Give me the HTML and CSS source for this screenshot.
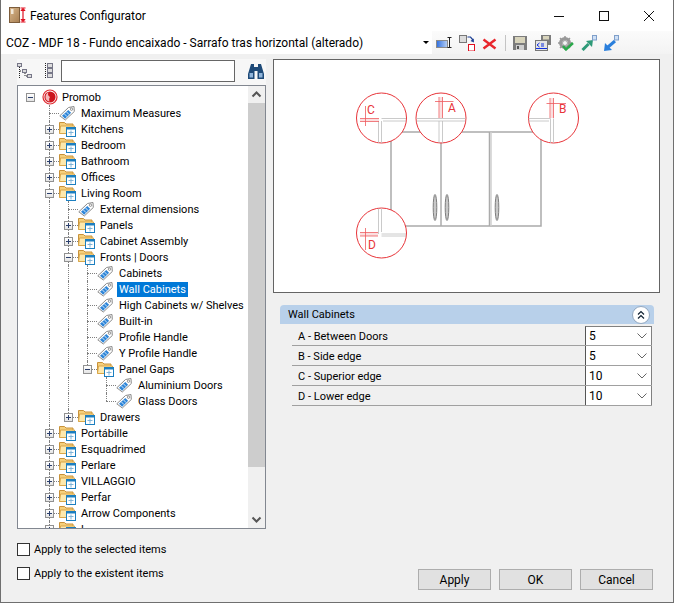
FILE: index.html
```html
<!DOCTYPE html>
<html lang="en">
<head>
  <meta charset="UTF-8">
  <title>Features Configurator</title>
  <link rel="stylesheet" href="styles.css">
</head>
<body>

  <!-- Shared icons -->
  <svg class="defs" width="0" height="0">
    <defs>
      <linearGradient id="renameFill" x1="0" x2="1" y1="0" y2="0">
        <stop offset="0" stop-color="#2f6fe0"/>
        <stop offset="1" stop-color="#b8d0f4"/>
      </linearGradient>
      <linearGradient id="doorFill" x1="0" x2="1" y1="0" y2="1">
        <stop offset="0" stop-color="#d9b78c"/>
        <stop offset="1" stop-color="#a87f52"/>
      </linearGradient>
    </defs>
    <symbol id="folder" viewBox="0 0 18 16">
      <path d="M0.500 12.500V1.500h5l1.500 1.500h7v3" fill="#f5cf7c" stroke="#c8923a"/>
      <path d="M0.500 12.500l1-7.500h14l-1 7.500z" fill="#fde9ae" stroke="#d9a648"/>
      <rect x="7.500" y="6.500" width="9" height="9" fill="#fff" stroke="#1c7fc0"/>
      <rect x="7.500" y="6.500" width="9" height="2" fill="#1c7fc0"/>
      <path d="M12 9.500v5M9.500 11.500h5" stroke="#7fb4d8" fill="none"/>
    </symbol>
    <symbol id="tag" viewBox="0 0 16 16">
      <path d="M0.800 10.800 9.500 2.500l5.500-1 .300 5L6.300 15z" fill="#fff" stroke="#8a8a8a"/>
      <path d="M3 10.800 9.300 5l2.800 2.700-6 6z" fill="#2f86d8"/>
      <path d="M5.300 8.800 8 11.600M7.500 6.900l2.600 2.700" stroke="#cfe4f7" fill="none"/>
      <circle cx="12.500" cy="4.200" r="1.200" fill="#fff" stroke="#777" stroke-width=".8"/>
    </symbol>
  </svg>

  <div class="window">
    <div class="titlebar">
      <svg class="app-icon" width="18" height="18" viewBox="0 0 18 18">
        <rect x="1.500" y="0.500" width="10" height="15" fill="url(#doorFill)" stroke="#7d5d3c"/>
        <rect x="3" y="2" width="2.500" height="5" fill="#f1e7d8"/>
        <path d="M15 1.500v13" stroke="#e01020" stroke-width="1.200" fill="none"/>
        <path d="M12.500 1h5M12.500 15h5M13 3.500h4l-2-2zM13 12.500h4l-2 2z" stroke="#e01020" fill="#e01020"/>
      </svg>
      <span class="title">Features Configurator</span>
      <div class="win-controls">
        <svg width="12" height="12" viewBox="0 0 12 12"><path d="M1 6.500h10" stroke="#111" fill="none"/></svg>
        <svg width="12" height="12" viewBox="0 0 12 12"><rect x="1.500" y="1.500" width="9" height="9" stroke="#111" fill="none"/></svg>
        <svg width="12" height="12" viewBox="0 0 12 12"><path d="M1 1l10 10M11 1 1 11" stroke="#111" fill="none"/></svg>
      </div>
    </div>

    <div class="toolbar">
      <div class="combo">
        <span class="combo-text">COZ - MDF 18 - Fundo encaixado - Sarrafo tras horizontal (alterado)</span>
        <span class="combo-arrow"></span>
      </div>
      <div class="tool-icons">
        <svg width="17" height="16" viewBox="0 0 17 16">
          <rect x="0.500" y="5.500" width="11" height="7" fill="url(#renameFill)" stroke="#8a8a8a"/>
          <path d="M11.500 2.500h4M11.500 12.500h4M13.500 2.500v10" stroke="#222" fill="none"/>
        </svg>
        <svg width="16" height="16" viewBox="0 0 16 16">
          <rect x="0.500" y="0.500" width="7" height="7" fill="#dcdcdc" stroke="#777"/>
          <rect x="9.500" y="9.500" width="6" height="6.500" fill="#fff" stroke="#e01020"/>
          <path d="M8.500 2h3l2.500 3" stroke="#1c3f94" stroke-width="1.200" fill="none"/>
          <path d="M15 7.500l-.3-4-3.200 2.600z" fill="#1c3f94"/>
        </svg>
        <svg width="16" height="16" viewBox="0 0 16 16">
          <path d="M1.500 4.500l12 9M13.500 4.500l-12 9" stroke="#e8262c" stroke-width="2.400" fill="none"/>
        </svg>
        <span class="tool-sep"></span>
        <svg width="16" height="16" viewBox="0 0 16 16">
          <path d="M1 1h14v14H1z" fill="#7c7c7c"/>
          <rect x="3" y="2" width="10" height="6" fill="#d8d4bc"/>
          <rect x="4" y="10" width="8" height="5" fill="#cfcfcf"/>
          <rect x="5" y="11" width="2" height="3" fill="#555"/>
        </svg>
        <svg width="16" height="16" viewBox="0 0 16 16">
          <path d="M6 0h10v10H6z" fill="#7c7c7c"/>
          <rect x="8" y="1" width="6" height="3.500" fill="#d8d4bc"/>
          <rect x="0.500" y="5.500" width="12" height="10" fill="#e4e4e4" stroke="#777"/>
          <path d="M4.500 8 2 10l2.500 2M6 9h3M6 11h3" stroke="#1030e0" fill="none"/>
          <path d="M1 13.500h11" stroke="#1030e0"/>
        </svg>
        <svg width="16" height="16" viewBox="0 0 16 16">
          <circle cx="7" cy="8" r="4.500" fill="none" stroke="#999" stroke-width="3"/>
          <path d="M7 1v14M0 8h14M2 3l10 10M12 3 2 13" stroke="#999" stroke-width="1.500"/>
          <circle cx="7" cy="8" r="2" fill="#f4f4f4"/>
          <path d="M5 11 8 14.500l7-6.500" stroke="#2aa84a" stroke-width="2.400" fill="none"/>
        </svg>
        <svg width="16" height="16" viewBox="0 0 16 16">
          <path d="M1.500 15 7.500 9" stroke="#2e9a78" stroke-width="3" fill="none"/>
          <path d="M5 6l7-1-1 7z" fill="#2e9a78"/>
          <rect x="11.500" y="0.500" width="4" height="4.500" fill="#cfe0f5" stroke="#7f9fca"/>
        </svg>
        <svg width="16" height="16" viewBox="0 0 16 16">
          <path d="M4 12 11 6" stroke="#2a7fdc" stroke-width="3" fill="none"/>
          <path d="M0 16l1-8 7 7z" fill="#2a7fdc"/>
          <rect x="10.500" y="0.500" width="4" height="4.500" fill="#cfe0f5" stroke="#7f9fca"/>
        </svg>
      </div>
    </div>

    <div class="content">
      <div class="left">
        <div class="tree-tools">
          <svg class="tt-collapse" width="15" height="16" viewBox="0 0 15 16">
            <rect x="0.500" y="0.500" width="4" height="3" fill="#ddd" stroke="#778"/>
            <rect x="5.500" y="6.500" width="4" height="3" fill="#ddd" stroke="#778"/>
            <rect x="10.500" y="11.500" width="4" height="3" fill="#ddd" stroke="#778"/>
            <path d="M2.500 4v12M3 8h2M8 10v3h2" stroke="#222" stroke-dasharray="1 1" fill="none"/>
          </svg>
          <svg class="tt-expand" width="9" height="16" viewBox="0 0 9 16">
            <path d="M1.500 0v16" stroke="#222" stroke-dasharray="1 1" fill="none"/>
            <rect x="3.500" y="0.500" width="5" height="4" fill="#ddd" stroke="#778"/>
            <rect x="3.500" y="5.500" width="5" height="4" fill="#ddd" stroke="#778"/>
            <rect x="3.500" y="10.500" width="5" height="4" fill="#ddd" stroke="#778"/>
          </svg>
          <input class="search" type="text">
          <svg class="binoculars" width="16" height="15" viewBox="0 0 16 15">
            <path d="M3 0h3v3h4V0h3l3 10v5H9.500V7h-3v8H0v-5z" fill="#1e4a78"/>
            <rect x="1.500" y="9" width="3.500" height="4.500" fill="#8fb4da"/>
            <rect x="11" y="9" width="3.500" height="4.500" fill="#8fb4da"/>
          </svg>
        </div>

        <div class="tree">
          <div class="tree-rows">
            <div class="row">
              <span class="cell exp minus solo"></span>
              <span class="cell icon"><svg width="16" height="16" viewBox="0 0 16 16">
                <circle cx="8" cy="8" r="7" fill="#fff" stroke="#e02a30" stroke-width="1.200"/>
                <circle cx="8" cy="8" r="5.600" fill="#cc141c"/>
                <path d="M3.500 8c0-3 2-4.500 3-4.500C5.500 5 6 7 8 8c-1 1-1 3-.5 4.500C5 12 3.500 10.500 3.500 8z" fill="#f4b8ba"/>
              </svg></span>
              <span class="label">Promob</span>
            </div>
            <div class="row"><span class="cell"></span><span class="cell tee"></span><svg class="ic" width="16" height="16"><use href="#tag"/></svg><span class="label">Maximum Measures</span></div>
            <div class="row"><span class="cell"></span><span class="cell exp plus v"></span><svg class="ic" width="18" height="16"><use href="#folder"/></svg><span class="label">Kitchens</span></div>
            <div class="row"><span class="cell"></span><span class="cell exp plus v"></span><svg class="ic" width="18" height="16"><use href="#folder"/></svg><span class="label">Bedroom</span></div>
            <div class="row"><span class="cell"></span><span class="cell exp plus v"></span><svg class="ic" width="18" height="16"><use href="#folder"/></svg><span class="label">Bathroom</span></div>
            <div class="row"><span class="cell"></span><span class="cell exp plus v"></span><svg class="ic" width="18" height="16"><use href="#folder"/></svg><span class="label">Offices</span></div>
            <div class="row"><span class="cell"></span><span class="cell exp minus v"></span><svg class="ic" width="18" height="16"><use href="#folder"/></svg><span class="label">Living Room</span></div>
            <div class="row"><span class="cell"></span><span class="cell v"></span><span class="cell tee"></span><svg class="ic" width="16" height="16"><use href="#tag"/></svg><span class="label">External dimensions</span></div>
            <div class="row"><span class="cell"></span><span class="cell v"></span><span class="cell exp plus v"></span><svg class="ic" width="18" height="16"><use href="#folder"/></svg><span class="label">Panels</span></div>
            <div class="row"><span class="cell"></span><span class="cell v"></span><span class="cell exp plus v"></span><svg class="ic" width="18" height="16"><use href="#folder"/></svg><span class="label">Cabinet Assembly</span></div>
            <div class="row"><span class="cell"></span><span class="cell v"></span><span class="cell exp minus v"></span><svg class="ic" width="18" height="16"><use href="#folder"/></svg><span class="label">Fronts | Doors</span></div>
            <div class="row"><span class="cell"></span><span class="cell v"></span><span class="cell v"></span><span class="cell tee"></span><svg class="ic" width="16" height="16"><use href="#tag"/></svg><span class="label">Cabinets</span></div>
            <div class="row"><span class="cell"></span><span class="cell v"></span><span class="cell v"></span><span class="cell tee"></span><svg class="ic" width="16" height="16"><use href="#tag"/></svg><span class="label selected">Wall Cabinets</span></div>
            <div class="row"><span class="cell"></span><span class="cell v"></span><span class="cell v"></span><span class="cell tee"></span><svg class="ic" width="16" height="16"><use href="#tag"/></svg><span class="label">High Cabinets w/ Shelves</span></div>
            <div class="row"><span class="cell"></span><span class="cell v"></span><span class="cell v"></span><span class="cell tee"></span><svg class="ic" width="16" height="16"><use href="#tag"/></svg><span class="label">Built-in</span></div>
            <div class="row"><span class="cell"></span><span class="cell v"></span><span class="cell v"></span><span class="cell tee"></span><svg class="ic" width="16" height="16"><use href="#tag"/></svg><span class="label">Profile Handle</span></div>
            <div class="row"><span class="cell"></span><span class="cell v"></span><span class="cell v"></span><span class="cell tee"></span><svg class="ic" width="16" height="16"><use href="#tag"/></svg><span class="label">Y Profile Handle</span></div>
            <div class="row"><span class="cell"></span><span class="cell v"></span><span class="cell v"></span><span class="cell exp minus end"></span><svg class="ic" width="18" height="16"><use href="#folder"/></svg><span class="label">Panel Gaps</span></div>
            <div class="row"><span class="cell"></span><span class="cell v"></span><span class="cell v"></span><span class="cell"></span><span class="cell tee"></span><svg class="ic" width="16" height="16"><use href="#tag"/></svg><span class="label">Aluminium Doors</span></div>
            <div class="row"><span class="cell"></span><span class="cell v"></span><span class="cell v"></span><span class="cell"></span><span class="cell end"></span><svg class="ic" width="16" height="16"><use href="#tag"/></svg><span class="label">Glass Doors</span></div>
            <div class="row"><span class="cell"></span><span class="cell v"></span><span class="cell exp plus end"></span><svg class="ic" width="18" height="16"><use href="#folder"/></svg><span class="label">Drawers</span></div>
            <div class="row"><span class="cell"></span><span class="cell exp plus v"></span><svg class="ic" width="18" height="16"><use href="#folder"/></svg><span class="label">Portábille</span></div>
            <div class="row"><span class="cell"></span><span class="cell exp plus v"></span><svg class="ic" width="18" height="16"><use href="#folder"/></svg><span class="label">Esquadrimed</span></div>
            <div class="row"><span class="cell"></span><span class="cell exp plus v"></span><svg class="ic" width="18" height="16"><use href="#folder"/></svg><span class="label">Perlare</span></div>
            <div class="row"><span class="cell"></span><span class="cell exp plus v"></span><svg class="ic" width="18" height="16"><use href="#folder"/></svg><span class="label">VILLAGGIO</span></div>
            <div class="row"><span class="cell"></span><span class="cell exp plus v"></span><svg class="ic" width="18" height="16"><use href="#folder"/></svg><span class="label">Perfar</span></div>
            <div class="row"><span class="cell"></span><span class="cell exp plus v"></span><svg class="ic" width="18" height="16"><use href="#folder"/></svg><span class="label">Arrow Components</span></div>
            <div class="row"><span class="cell"></span><span class="cell exp plus v"></span><svg class="ic" width="18" height="16"><use href="#folder"/></svg><span class="label">L</span></div>
          </div>
          <div class="scrollbar">
            <svg class="sb-arrow" width="17" height="17" viewBox="0 0 17 17"><path d="M4.500 10.500 8.500 6.500l4 4" stroke="#555" stroke-width="2" fill="none"/></svg>
            <div class="sb-thumb"></div>
            <svg class="sb-arrow" width="17" height="17" viewBox="0 0 17 17"><path d="M4.500 6.500l4 4 4-4" stroke="#555" stroke-width="2" fill="none"/></svg>
          </div>
        </div>

        <label class="check"><span class="box"></span>Apply to the selected items</label>
        <label class="check"><span class="box"></span>Apply to the existent items</label>
      </div>

      <div class="right">
        <div class="preview">
          <svg width="385" height="232" viewBox="274 60 385 232">
            <!-- cabinet body -->
            <g fill="none" stroke="#ababab" stroke-width="1.500">
              <path d="M391 132H541V226H391z"/>
              <path d="M441 132V226"/>
              <path d="M489.500 132V226"/>
              <path d="M491 132V226" stroke="#cfcfcf"/>
            </g>
            <g fill="#c8c8c8" stroke="#7d7d7d">
              <ellipse cx="435" cy="207.500" rx="1.800" ry="13"/>
              <ellipse cx="447" cy="207.500" rx="1.800" ry="13"/>
              <ellipse cx="497" cy="207.500" rx="1.800" ry="13"/>
            </g>
            <!-- detail circles -->
            <g fill="#fff" stroke="#e8353a">
              <circle cx="381.500" cy="118" r="25"/>
              <circle cx="441" cy="118" r="25"/>
              <circle cx="553.500" cy="118" r="25"/>
              <circle cx="381.500" cy="233" r="25"/>
            </g>
            <g fill="none" stroke="#bdbdbd" stroke-width=".8">
              <path d="M378.500 143V121M381.500 143V121M381.500 118.500H406M383 121H406"/>
              <path d="M416.500 118.500H465.500M416.500 121H465.500M439 121V143M442.500 121V143"/>
              <path d="M528.500 118.500H550.500V143M528.500 121H549M553.500 118.500V143"/>
              <path d="M378.500 208.500V234M381.500 208.500V232M381.500 234H406M381.500 236H406"/>
            </g>
            <g class="pink">
              <rect x="360" y="119" width="19" height="2"/>
              <rect x="439.500" y="97" width="3" height="21"/>
              <rect x="550.500" y="98" width="3" height="20"/>
              <rect x="360" y="233" width="18" height="3"/>
            </g>
            <g fill="none" stroke="#ee5a5e" stroke-width=".8">
              <path d="M365.500 106V126M360 118.500H379M360 121.500H379"/>
              <path d="M435 101.500H453.500M439 97V118M442.500 97V118"/>
              <path d="M546.500 103.500H566M550 98V118M553.500 98V118"/>
              <path d="M365.500 228V250M360 232.500H378M360 236H378"/>
            </g>
            <g class="marks">
              <text x="367" y="114">C</text>
              <text x="448" y="112">A</text>
              <text x="559" y="113">B</text>
              <text x="368" y="249">D</text>
            </g>
          </svg>
        </div>

        <div class="panel">
          <div class="panel-head">
            <span>Wall Cabinets</span>
            <span class="collapse">
              <svg width="10" height="10" viewBox="0 0 10 10"><path d="M2 4.500 5 1.500l3 3M2 8.500l3-3 3 3" stroke="#123" stroke-width="1.200" fill="none"/></svg>
            </span>
          </div>
          <div class="props">
            <div class="prop"><span class="prop-name">A - Between Doors</span><span class="prop-value">5<svg class="chev" width="10" height="6" viewBox="0 0 10 6"><path d="M.5 .5 5 5 9.500 .5" stroke="#666" fill="none"/></svg></span></div>
            <div class="prop"><span class="prop-name">B - Side edge</span><span class="prop-value">5<svg class="chev" width="10" height="6" viewBox="0 0 10 6"><path d="M.5 .5 5 5 9.500 .5" stroke="#666" fill="none"/></svg></span></div>
            <div class="prop"><span class="prop-name">C - Superior edge</span><span class="prop-value">10<svg class="chev" width="10" height="6" viewBox="0 0 10 6"><path d="M.5 .5 5 5 9.500 .5" stroke="#666" fill="none"/></svg></span></div>
            <div class="prop"><span class="prop-name">D - Lower edge</span><span class="prop-value">10<svg class="chev" width="10" height="6" viewBox="0 0 10 6"><path d="M.5 .5 5 5 9.500 .5" stroke="#666" fill="none"/></svg></span></div>
          </div>
        </div>

        <div class="buttons">
          <button class="btn">Apply</button>
          <button class="btn">OK</button>
          <button class="btn">Cancel</button>
        </div>
      </div>
    </div>
  </div>

</body>
</html>
```

FILE: styles.css
```css
* {
  box-sizing: border-box;
}

body {
  margin: 0;
  font-family: Roboto, "Liberation Sans", sans-serif;
  font-size: 12px;
  color: #000;
  background-color: #f0f0f0;
}

.defs {
  display: block;
  height: 0;
}

.window {
  width: 674px;
  height: 603px;
  display: flex;
  flex-direction: column;
  background-color: #f0f0f0;
  border: 1px solid #6f6f6f;
  border-top: 0;
  overflow: hidden;
}

/* Title bar */
.titlebar {
  height: 31px;
  flex: none;
  display: flex;
  align-items: center;
  padding-left: 7px;
  background-color: #fff;
}

.app-icon {
  margin-right: 4px;
}

.win-controls {
  margin-left: auto;
  display: flex;
  gap: 33px;
  padding-right: 18px;
}

/* Toolbar with the combo */
.toolbar {
  height: 23px;
  flex: none;
  display: flex;
  align-items: center;
  background: linear-gradient(#fbfbfb, #f3f3f3);
}

.combo {
  width: 431px;
  height: 23px;
  display: flex;
  align-items: center;
  justify-content: space-between;
  padding: 0 3px 0 5px;
  background-color: #fff;
}

.combo-arrow {
  width: 0;
  height: 0;
  border-left: 3px solid transparent;
  border-right: 3px solid transparent;
  border-top: 3px solid #000;
}

.tool-icons {
  display: flex;
  align-items: center;
  gap: 7px;
  padding-left: 4px;
}

.tool-icons svg:first-child {
  margin-right: -1px;
}

.tool-sep {
  width: 1px;
  height: 16px;
  margin-right: -1px;
  background-color: #c4c4c4;
}

/* Main area */
.content {
  flex: 1;
  display: flex;
  gap: 7px;
  padding: 5px 13px 12px 16px;
  min-height: 0;
  font-size: 11px;
}

.left {
  width: 249px;
  flex: none;
  display: flex;
  flex-direction: column;
}

.right {
  width: 387px;
  flex: none;
  display: flex;
  flex-direction: column;
}

.tree-tools {
  height: 26px;
  display: flex;
  align-items: center;
  background-color: #f7f7f7;
}

.tt-collapse {
  margin-bottom: 2px;
}

.tt-expand {
  margin: 0 0 2px 12px;
}

.search {
  width: 174px;
  height: 22px;
  margin: 0 0 2px 8px;
  border: 1px solid #666;
  background-color: #fff;
  padding: 0;
}

.binoculars {
  margin: 0 0 2px 13px;
}

/* Tree */
.tree {
  height: 444px;
  display: flex;
  background-color: #fff;
  border: 1px solid #828790;
  overflow: hidden;
}

.tree-rows {
  flex: 1;
  padding: 3px 0 0 3px;
  overflow: hidden;
}

.row {
  height: 16px;
  display: flex;
  align-items: center;
  white-space: nowrap;
}

.cell {
  width: 19px;
  height: 16px;
  flex: none;
  position: relative;
}

.icon {
  display: flex;
  align-items: center;
  justify-content: center;
}

.ic {
  flex: none;
  margin-right: 1px;
}

svg.ic[width="16"] {
  margin-right: 3px;
}

.label {
  margin-left: 1px;
  padding: 0 2px;
  height: 15px;
  line-height: 15px;
}

.selected {
  background-color: #0078d7;
  color: #fff;
}

/* Dotted guide lines */
.v::before,
.tee::before {
  content: "";
  position: absolute;
  left: 9px;
  top: 0;
  bottom: 0;
  border-left: 1px dotted #808080;
}

.end::before {
  content: "";
  position: absolute;
  left: 9px;
  top: 0;
  height: 8px;
  border-left: 1px dotted #808080;
}

.tee::after,
.end::after,
.exp::after {
  content: "";
  position: absolute;
  left: 9px;
  right: 0;
  top: 8px;
  border-top: 1px dotted #808080;
}

/* Expander boxes, the sign is drawn with gradients */
.plus,
.minus {
  background-repeat: no-repeat;
}

.plus {
  background-image:
    linear-gradient(#2b3f6c, #2b3f6c),
    linear-gradient(#2b3f6c, #2b3f6c),
    linear-gradient(#fff, #e4e4e4),
    linear-gradient(#919191, #919191);
  background-size: 5px 1px, 1px 5px, 7px 7px, 9px 9px;
  background-position: 7px 8px, 9px 6px, 6px 5px, 5px 4px;
}

.minus {
  background-image:
    linear-gradient(#2b3f6c, #2b3f6c),
    linear-gradient(#fff, #e4e4e4),
    linear-gradient(#919191, #919191);
  background-size: 5px 1px, 7px 7px, 9px 9px;
  background-position: 7px 8px, 6px 5px, 5px 4px;
}

.exp::after {
  left: 14px;
}

.exp::before {
  clip-path: polygon(0 0, 100% 0, 100% 4px, 0 4px, 0 13px, 100% 13px, 100% 100%, 0 100%);
}

.solo::after {
  display: none;
}

/* Scrollbar */
.scrollbar {
  width: 17px;
  flex: none;
  display: flex;
  flex-direction: column;
  background-color: #f0f0f0;
}

.sb-arrow {
  flex: none;
}

.sb-thumb {
  height: 364px;
  margin-bottom: auto;
  background-color: #cdcdcd;
}

.check {
  display: flex;
  align-items: center;
  height: 13px;
  margin-top: 14px;
}

.check + .check {
  margin-top: 11px;
}

.box {
  width: 13px;
  height: 13px;
  margin-right: 4px;
  background-color: #fff;
  border: 1px solid #333;
}

/* Preview */
.preview {
  height: 234px;
  flex: none;
  background-color: #fff;
  border: 1px solid #646464;
}

.preview svg {
  display: block;
}

.pink {
  fill: #fbdfe0;
}

.marks {
  font-size: 12px;
  fill: #e8353a;
}

/* Property panel */
.panel {
  margin: 12px 6px 0 7px;
}

.panel-head {
  height: 19px;
  display: flex;
  align-items: center;
  justify-content: space-between;
  padding: 0 4px 0 8px;
  background-color: #b8d0ea;
  border-radius: 4px 4px 0 0;
}

.collapse {
  width: 18px;
  height: 18px;
  display: flex;
  align-items: center;
  justify-content: center;
  border-radius: 50%;
  background-color: #fff;
  border: 1px solid #93a8c0;
}

.props {
  margin: 2px 2px 0 12px;
}

.prop {
  height: 20px;
  display: flex;
  border-bottom: 1px solid #a0a0a0;
}

.prop-name {
  flex: 1;
  padding: 1px 0 0 6px;
  line-height: 20px;
}

.prop-value {
  width: 67px;
  display: flex;
  align-items: center;
  justify-content: space-between;
  padding: 0 4px 0 3px;
  font-size: 12px;
  background-color: #fff;
  border-left: 1px solid #555;
  border-right: 1px solid #808080;
}

.prop:first-child .prop-value {
  border-top: 1px solid #808080;
}

/* Dialog buttons */
.buttons {
  margin-top: auto;
  display: flex;
  justify-content: flex-end;
  gap: 8px;
  padding-right: 7px;
}

.btn {
  width: 73px;
  height: 21px;
  padding: 0;
  font: inherit;
  font-size: 12px;
  color: #000;
  background-color: #e1e1e1;
  border: 1px solid #adadad;
}
```
